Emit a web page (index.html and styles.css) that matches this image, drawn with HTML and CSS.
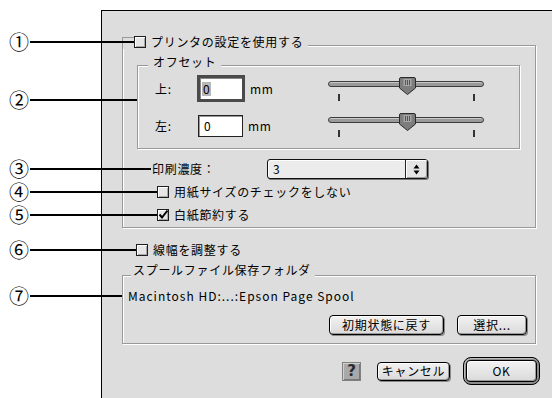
FILE: index.html
```html
<!DOCTYPE html>
<html lang="ja">
<head>
<meta charset="utf-8">
<link rel="stylesheet" href="styles.css">
</head>
<body>
<div class="page">
  <div class="panel">
    <div class="group group-main">
      <div class="group-title title-check">
        <span class="cb"></span><span>プリンタの設定を使用する</span>
      </div>
      <div class="group group-offset">
        <div class="group-title title-offset"><span>オフセット</span></div>
        <div class="offset-row row-top">
          <div class="field-group">
            <span class="lbl">上:</span>
            <span class="field field-focus"><span class="sel">0</span></span>
            <span class="unit">mm</span>
          </div>
          <div class="slider slider-top">
            <div class="track"></div>
            <svg class="thumb" viewBox="0 0 17 18" width="17" height="18"><path d="M2 0.5 H15 A1.5 1.5 0 0 1 16.5 2 V11 L8.5 17.5 L0.5 11 V2 A1.5 1.5 0 0 1 2 0.5 Z" fill="#7d7d7d" stroke="#2a2a2a"/><rect x="4.5" y="2" width="8" height="7" fill="#a6a6a6"/><path d="M6.5 3 V8 M8.5 3 V8 M10.5 3 V8" stroke="#555" stroke-width="1"/></svg>
            <span class="tick tick-l"></span><span class="tick tick-r"></span>
          </div>
        </div>
        <div class="offset-row row-bottom">
          <div class="field-group">
            <span class="lbl">左:</span>
            <span class="field field-plain">0</span>
            <span class="unit">mm</span>
          </div>
          <div class="slider">
            <div class="track"></div>
            <svg class="thumb" viewBox="0 0 17 18" width="17" height="18"><path d="M2 0.5 H15 A1.5 1.5 0 0 1 16.5 2 V11 L8.5 17.5 L0.5 11 V2 A1.5 1.5 0 0 1 2 0.5 Z" fill="#7d7d7d" stroke="#2a2a2a"/><rect x="4.5" y="2" width="8" height="7" fill="#a6a6a6"/><path d="M6.5 3 V8 M8.5 3 V8 M10.5 3 V8" stroke="#555" stroke-width="1"/></svg>
            <span class="tick tick-l"></span><span class="tick tick-r"></span>
          </div>
        </div>
      </div>
      <div class="density-row">
        <span class="density-label">印刷濃度：</span>
        <div class="popup">
          <span class="popup-value">3</span>
          <span class="popup-arrows"><svg viewBox="0 0 7 11" width="7" height="11"><path d="M3.5 0.5 L6.5 4.5 H0.5 Z M3.5 10.5 L6.5 6.5 H0.5 Z" fill="#000"/></svg></span>
        </div>
      </div>
      <div class="check-row row-paper"><span class="cb"></span><span>用紙サイズのチェックをしない</span></div>
      <div class="check-row row-blank"><span class="cb cb-on"><svg viewBox="0 0 12 12" width="12" height="12"><path d="M2.5 5.5 L5 8.5 L10.5 1.5" stroke="#000" stroke-width="2" fill="none"/></svg></span><span>白紙節約する</span></div>
    </div>

    <div class="check-row row-width"><span class="cb"></span><span>線幅を調整する</span></div>

    <div class="group group-spool">
      <div class="group-title title-spool"><span>スプールファイル保存フォルダ</span></div>
      <div class="spool-path">Macintosh HD:...:Epson Page Spool</div>
      <div class="spool-buttons">
        <span class="btn btn-reset">初期状態に戻す</span>
        <span class="btn btn-select">選択...</span>
      </div>
    </div>

    <div class="dialog-buttons">
      <span class="help">?</span>
      <span class="btn btn-cancel">キャンセル</span>
      <span class="default-ring"><span class="btn btn-ok">OK</span></span>
    </div>
  </div>

  <div class="ann ann-1"><span class="ann-num">①</span><span class="ann-line"></span></div>
  <div class="ann ann-2"><span class="ann-num">②</span><span class="ann-line"></span></div>
  <div class="ann ann-3"><span class="ann-num">③</span><span class="ann-line"></span></div>
  <div class="ann ann-4"><span class="ann-num">④</span><span class="ann-line"></span></div>
  <div class="ann ann-5"><span class="ann-num">⑤</span><span class="ann-line"></span></div>
  <div class="ann ann-6"><span class="ann-num">⑥</span><span class="ann-line"></span></div>
  <div class="ann ann-7"><span class="ann-num">⑦</span><span class="ann-line"></span></div>
</div>
</body>
</html>
```
FILE: styles.css
```css
* { box-sizing: border-box; }
html, body { margin: 0; padding: 0; background: #fff; }
body {
  font-family: "Noto Sans CJK JP", "Noto Sans", sans-serif;
  font-size: 12px;
  color: #000;
  letter-spacing: 0.7px;
}
.page {
  position: relative;
  width: 552px;
  height: 398px;
  padding: 10px 0 0 101px;
  overflow: hidden;
}
.panel {
  width: 451px;
  height: 388px;
  background: #dddddd;
  border-top: 1px solid #000;
  border-left: 1px solid #000;
  overflow: hidden;
}

/* group boxes */
.group {
  position: relative;
  border: 1px solid #999;
  box-shadow: 1px 1px 0 #fff, inset 1px 1px 0 #fff;
}
.group-title {
  display: flex;
  align-items: center;
  gap: 5px;
  width: fit-content;
  height: 14px;
  line-height: 14px;
  background: #dddddd;
  white-space: nowrap;
}
.group-main {
  width: 414px;
  margin: 34px 0 0 20px;
  padding-bottom: 5px;
}
.group-main::before {
  content: "";
  position: absolute;
  left: -1px;
  top: -9px;
  width: 11px;
  height: 9px;
  border-top: 1px solid #999;
  border-left: 1px solid #999;
}
.title-check {
  margin-top: -11px;
  padding: 0 5px 0 11px;
}
.group-offset {
  width: 383px;
  margin: 16px 0 0 14px;
  padding-bottom: 11px;
}
.title-offset {
  margin: -11px 0 0 10px;
  padding: 0 4px 0 5px;
}

/* offset rows */
.offset-row {
  display: flex;
  align-items: flex-start;
  padding-left: 17px;
}
.row-top { margin-top: 6px; }
.row-bottom { margin-top: 11px; }
.field-group {
  display: flex;
  align-items: center;
  width: 173px;
}
.row-top .field-group { height: 27px; }
.row-bottom .field-group { height: 23px; margin-top: 1px; }
.lbl { width: 42px; }
.field {
  display: flex;
  align-items: center;
  background: #fff;
  line-height: 14px;
}
.field-focus {
  width: 48px;
  height: 27px;
  border: 3px solid #4a4a4a;
  box-shadow: inset 1px 1px 0 #888;
  padding-left: 2px;
}
.sel { background: #b8b8b8; padding: 0 1px; letter-spacing: 0; }
.field-plain {
  width: 45px;
  height: 22px;
  margin-left: 1px;
  border: 1px solid #222;
  box-shadow: inset 1px 1px 0 #999;
  padding-left: 5px;
  letter-spacing: 0;
}
.unit { margin-left: 5px; }

/* sliders */
.slider {
  position: relative;
  width: 156px;
  height: 24px;
}
.slider-top { margin-top: 2px; }
.track {
  position: absolute;
  left: 0;
  top: 4px;
  width: 156px;
  height: 6px;
  border: 1px solid #3c3c3c;
  border-radius: 3px;
  background: #9a9a9a;
  box-shadow: inset 0 1px 0 #c8c8c8;
}
.thumb {
  position: absolute;
  left: 71px;
  top: 0;
}
.tick {
  position: absolute;
  top: 17px;
  width: 2px;
  height: 7px;
  background: #333;
}
.tick-l { left: 10px; }
.tick-r { left: 145px; }

/* density popup */
.density-row {
  display: flex;
  align-items: flex-start;
  height: 21px;
  margin: 10px 0 0 29px;
}
.density-label {
  width: 115px;
  line-height: 20px;
}
.popup {
  display: flex;
  width: 161px;
  height: 20px;
  border: 1px solid #111;
  border-radius: 3px;
  background: #ececec;
  box-shadow: 1px 1px 0 #777, inset 1px 1px 0 #fff;
}
.popup-value {
  flex: 1;
  padding-left: 5px;
  line-height: 18px;
}
.popup-arrows {
  display: flex;
  align-items: center;
  justify-content: center;
  width: 22px;
  border-left: 1px solid #222;
  background: #e4e4e4;
  box-shadow: inset 1px 1px 0 #fff, inset -1px -1px 0 #999;
  border-radius: 0 2px 2px 0;
}

/* checkboxes */
.check-row {
  display: flex;
  align-items: center;
  gap: 5px;
  height: 14px;
  line-height: 14px;
  white-space: nowrap;
}
.cb {
  flex: none;
  width: 12px;
  height: 12px;
  border: 1px solid #1e1e1e;
  background: #e6e6e6;
  box-shadow: inset 1px 1px 0 #fff, inset -1px -1px 0 #a8a8a8;
  position: relative;
}
.cb svg { position: absolute; left: -1px; top: -1px; }
.row-paper { margin: 5px 0 0 34px; }
.row-blank { margin: 9px 0 0 34px; }
.row-width { margin: 15px 0 0 34px; }

/* spool group */
.group-spool {
  width: 414px;
  margin: 18px 0 0 20px;
  padding-bottom: 8px;
}
.title-spool {
  margin: -13px 0 0 8px;
  padding: 0 4px 0 2px;
}
.spool-path {
  margin: 12px 0 0 5px;
  line-height: 14px;
  letter-spacing: 1px;
}
.spool-buttons {
  display: flex;
  justify-content: flex-end;
  gap: 13px;
  margin-top: 12px;
  padding-right: 8px;
}

/* buttons */
.btn {
  display: flex;
  align-items: center;
  justify-content: center;
  height: 20px;
  border: 1px solid #000;
  border-radius: 4px;
  background: linear-gradient(#f2f2f2, #dadada);
  box-shadow: inset 1px 1px 0 #fff, inset -1px -1px 0 #9a9a9a, 1px 1px 0 #8a8a8a;
  white-space: nowrap;
  line-height: 14px;
}
.btn-reset { width: 115px; }
.btn-select { width: 70px; }
.dialog-buttons {
  display: flex;
  justify-content: flex-end;
  align-items: center;
  margin-top: 13px;
  padding-right: 12px;
}
.help {
  display: flex;
  align-items: center;
  justify-content: center;
  width: 19px;
  height: 19px;
  margin-right: 16px;
  background: #a9a9a9;
  border: 1px solid #808080;
  box-shadow: inset 1px 1px 0 #d0d0d0, inset -1px -1px 0 #777;
  font-family: "DejaVu Sans", sans-serif;
  font-weight: bold;
  font-size: 15px;
  color: #2a2a2a;
  letter-spacing: 0;
}
.btn-cancel { width: 73px; height: 19px; margin-right: 13px; }
.default-ring {
  display: flex;
  width: 77px;
  height: 28px;
  padding: 2px;
  border: 1px solid #000;
  border-radius: 8px;
  background: #8c8c8c;
  box-shadow: inset 1px 1px 0 #bdbdbd;
}
.btn-ok { width: 71px; height: 22px; box-shadow: inset 1px 1px 0 #fff, inset -1px -1px 0 #9a9a9a; }

/* annotations (callouts drawn over the dialog) */
.ann {
  position: absolute;
  left: 9px;
  display: flex;
  align-items: center;
  height: 20px;
}
.ann-num {
  width: 21px;
  font-size: 20px;
  line-height: 20px;
  letter-spacing: 0;
}
.ann-line {
  height: 2px;
  background: #000;
}
.ann-1 { top: 32px; }
.ann-1 .ann-line { width: 104px; }
.ann-2 { top: 90px; }
.ann-2 .ann-line { width: 107px; }
.ann-3 { top: 159px; }
.ann-3 .ann-line { width: 121px; }
.ann-4 { top: 182px; }
.ann-4 .ann-line { width: 127px; }
.ann-5 { top: 205px; }
.ann-5 .ann-line { width: 127px; }
.ann-6 { top: 240px; }
.ann-6 .ann-line { width: 106px; }
.ann-7 { top: 286px; }
.ann-7 .ann-line { width: 92px; }
```
